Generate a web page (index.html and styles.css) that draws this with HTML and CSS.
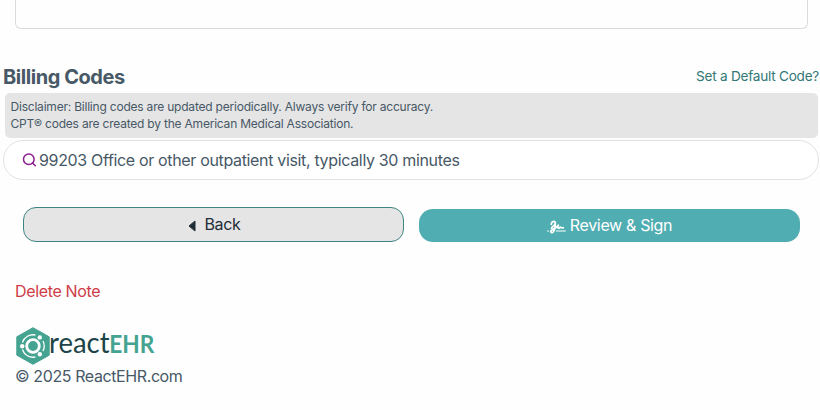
FILE: index.html
```
<!DOCTYPE html>
<html lang="en">
<head>
    <meta charset="UTF-8">
    <meta name="viewport" content="width=device-width, initial-scale=1.0">
    <title>ReactEHR</title>
    <link rel="stylesheet" href="styles.css">
</head>
<body>
    <div class="note-panel"></div>

    <section class="billing">
        <div class="billing-header">
            <h2>Billing Codes</h2>
            <a class="default-link" href="#">Set a Default Code?</a>
        </div>
        <div class="disclaimer">
            <p>Disclaimer: Billing codes are updated periodically. Always verify for accuracy.</p>
            <p>CPT® codes are created by the American Medical Association.</p>
        </div>
        <div class="code-search">
            <svg class="search-icon" width="14" height="14" viewBox="0 0 14 14">
                <circle cx="6.8" cy="6.3" r="5.3" />
                <path d="M10.5 10l2.8 2.8" />
            </svg>
            <span>99203 Office or other outpatient visit, typically 30 minutes</span>
        </div>
    </section>

    <div class="actions">
        <button class="btn btn-back">
            <svg class="back-icon" width="8" height="12" viewBox="0 0 8 12">
                <path d="M7 1v10L1 6z" />
            </svg>
            Back
        </button>
        <button class="btn btn-sign">
            <svg class="sign-icon" width="19" height="14" viewBox="0 0 19 14">
                <path class="scribble" d="M4.3 4.3C4 1.8 7.8.3 8.3 2.5 8.8 5 5.3 6.2 4.5 8.2M8.3 2.5C8.4 6 8 9.8 6.2 12 4.6 13.6 3.2 11.8 4.3 10.5 6 8.8 9.3 8.2 11.4 5.2 10.6 7 10.6 8.6 12 8.2 12.8 7.8 13.2 7 13.6 7.2 14.1 7.6 14.4 8 16.4 7.8" />
                <path class="line" d="M.6 11h1M9.4 11h9" />
            </svg>
            Review &amp; Sign
        </button>
    </div>

    <a class="delete-link" href="#">Delete Note</a>

    <footer>
        <svg class="logo" width="150" height="38" viewBox="0 0 150 38">
            <path class="hexagon" d="M18 .7L34.2 9.8V28.2L18 37.3 1.8 28.2V9.8z" />
            <circle class="ring" cx="18" cy="19" r="6.3" />
            <g class="orbit">
                <path d="M7.4 15.5A11.2 11.2 0 0 1 20.4 8" />
                <path d="M28 14A11.2 11.2 0 0 1 28 24" />
                <path d="M20.4 30A11.2 11.2 0 0 1 7.4 22.5" />
            </g>
            <g class="dots">
                <circle cx="24.8" cy="10.4" r="2.2" />
                <circle cx="7.2" cy="19.2" r="2.2" />
                <circle cx="24.8" cy="27.2" r="2.2" />
            </g>
            <text class="logo-react" x="34" y="25.7" textLength="60.5" lengthAdjust="spacingAndGlyphs">react</text>
            <text class="logo-ehr" x="94.3" y="25.7" textLength="45" lengthAdjust="spacingAndGlyphs">EHR</text>
        </svg>
        <p>© 2025 ReactEHR.com</p>
    </footer>
</body>
</html>
```

FILE: styles.css
```
* {
    margin: 0;
    padding: 0;
    box-sizing: border-box;
}
:root {
    --text-color: #475866;
    --teal: #50adb1;
    --dark-teal: #327876;
    --logo-green: #45a391;
}
body {
    font-family: "Inter", sans-serif;
    font-size: 16px;
    line-height: 24px;
    letter-spacing: -0.34px;
    color: var(--text-color);
    background: #fefefe;
    overflow: hidden;
}
a {
    text-decoration: none;
}
.note-panel {
    height: 29px;
    margin: 0 12px 0 15px;
    border: 1px solid #d8dcde;
    border-top: none;
    border-radius: 0 0 6px 6px;
}
.billing {
    padding: 33px 1px 0 3px;
}
.billing-header {
    display: flex;
    justify-content: space-between;
    align-items: center;
    height: 29px;
}
.billing-header h2 {
    font-size: 20px;
    font-weight: 700;
    letter-spacing: -0.45px;
}
.default-link {
    padding-bottom: 1px;
    font-size: 13.6px;
    letter-spacing: -0.25px;
    color: var(--dark-teal);
}
.disclaimer {
    height: 45px;
    margin: 2px 1px 2px 2px;
    padding: 5px 5px 0 5.5px;
    border-radius: 5px;
    background: #e5e5e5;
    font-size: 12px;
    line-height: 17px;
    letter-spacing: -0.21px;
}
.code-search {
    display: flex;
    align-items: center;
    gap: 3px;
    height: 40px;
    padding-left: 18px;
    border: 1px solid #dfe2e6;
    border-radius: 20px;
    background: #fff;
}
.search-icon {
    fill: none;
    stroke: #8b1d8f;
    stroke-width: 1.5;
    stroke-linecap: round;
}
.actions {
    display: grid;
    grid-template-columns: 1fr 1fr;
    align-items: end;
    gap: 15px;
    padding: 27px 20px 0 23px;
}
.btn {
    display: flex;
    align-items: center;
    justify-content: center;
    border: none;
    font: inherit;
    letter-spacing: inherit;
}
.btn-back {
    height: 35px;
    gap: 8px;
    padding: 0 0 2px 2px;
    border: 1px solid #3d8582;
    border-radius: 13px;
    background: #e5e5e5;
    color: #1f2d37;
}
.back-icon {
    margin-top: 4px;
    fill: #1f2d37;
    stroke: #1f2d37;
    stroke-linejoin: round;
}
.btn-sign {
    height: 33px;
    gap: 4px;
    padding-bottom: 2px;
    border-radius: 14px;
    background: var(--teal);
    color: #fff;
}
.sign-icon {
    margin-top: 4px;
    fill: none;
    stroke: #fff;
    stroke-linecap: round;
    stroke-linejoin: round;
}
.scribble {
    stroke-width: 1.7;
}
.line {
    stroke-width: 1.2;
}
.delete-link {
    display: block;
    margin: 37px 0 0 15px;
    color: #cf3c47;
}
footer {
    padding: 24px 0 0 15px;
}
footer p {
    margin-top: -1px;
    letter-spacing: -0.4px;
}
.logo {
    display: block;
    overflow: visible;
    letter-spacing: 0;
}
.hexagon {
    fill: var(--logo-green);
    stroke: var(--logo-green);
    stroke-linejoin: round;
}
.ring {
    fill: none;
    stroke: #fff;
    stroke-width: 2.8;
}
.orbit {
    fill: none;
    stroke: #fff;
    stroke-width: 1.3;
}
.dots {
    fill: #fff;
}
.logo-react,
.logo-ehr {
    font-family: "Lato", sans-serif;
}
.logo-react {
    font-size: 29px;
    fill: #1d4448;
}
.logo-ehr {
    font-size: 25.5px;
    font-weight: 700;
    fill: var(--logo-green);
}
```
